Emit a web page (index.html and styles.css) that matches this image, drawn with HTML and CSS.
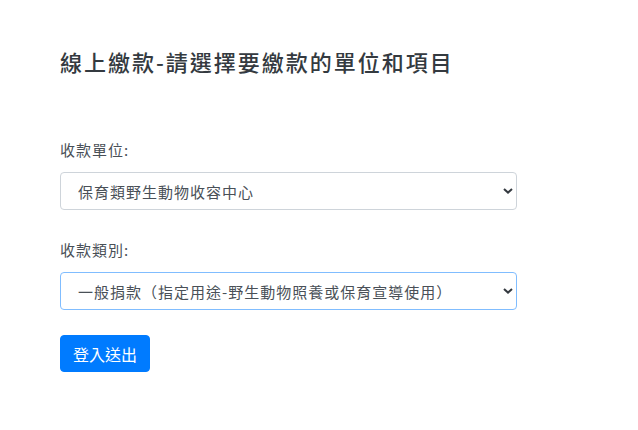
FILE: index.html
```html
<!DOCTYPE html>
<html lang="zh-Hant">
<head>
    <meta charset="utf-8">
    <title>線上繳款</title>
    <link rel="stylesheet" href="styles.css">
</head>
<body>
    <div class="page">
        <h3 class="title">線上繳款-請選擇要繳款的單位和項目</h3>

        <form class="pay-form" onsubmit="event.preventDefault();">
            <div class="form-group">
                <label for="unit">收款單位:</label>
                <div class="select-wrap">
                    <select id="unit" class="form-control">
                        <option>保育類野生動物收容中心</option>
                    </select>
                    <svg class="caret" width="10" height="6" viewBox="0 0 10 6"><path d="M1 1l4 3.6L9 1" fill="none" stroke="#343a40" stroke-width="2"/></svg>
                </div>
            </div>

            <div class="form-group">
                <label for="kind">收款類別:</label>
                <div class="select-wrap">
                    <select id="kind" class="form-control focus">
                        <option>一般捐款（指定用途-野生動物照養或保育宣導使用）</option>
                    </select>
                    <svg class="caret" width="10" height="6" viewBox="0 0 10 6"><path d="M1 1l4 3.6L9 1" fill="none" stroke="#343a40" stroke-width="2"/></svg>
                </div>
            </div>

            <button type="submit" class="button">登入送出</button>
        </form>
    </div>
</body>
</html>
```

FILE: styles.css
```css
body {
    margin: 0;
    font-family: "Noto Sans CJK TC", "Noto Sans", sans-serif;
    color: #212529;
    background: #fff;
}

.page {
    padding: 0 60px;
    width: 457px;
}

.title {
    margin: 48px 0 64px;
    font-size: 22px;
    font-weight: 500;
    letter-spacing: 2px;
    line-height: 26px;
    color: #343a40;
}

.form-group {
    margin-bottom: 28px;
}

.form-group:last-of-type {
    margin-bottom: 25px;
}

label {
    display: block;
    margin-bottom: 10px;
    font-size: 15px;
    letter-spacing: 1px;
    line-height: 24px;
    color: #495057;
}

/* select with a drawn caret */
.select-wrap {
    position: relative;
}

.form-control {
    display: block;
    width: 100%;
    height: 38px;
    padding: 0 30px 0 17px;
    border: 1px solid #ced4da;
    border-radius: 4px;
    background: #fff;
    font-family: inherit;
    font-size: 15px;
    letter-spacing: 1px;
    color: #495057;
    -webkit-appearance: none;
    appearance: none;
    box-sizing: border-box;
    outline: none;
}

.form-control.focus {
    border-color: #80bdff;
}

.caret {
    position: absolute;
    right: 4px;
    top: 16px;
    pointer-events: none;
}

.button {
    height: 37px;
    padding: 0 12px;
    background-color: #007bff;
    color: #fff;
    border: 1px solid #007bff;
    border-radius: 4px;
    font-family: inherit;
    font-size: 16px;
    cursor: pointer;
}
```
